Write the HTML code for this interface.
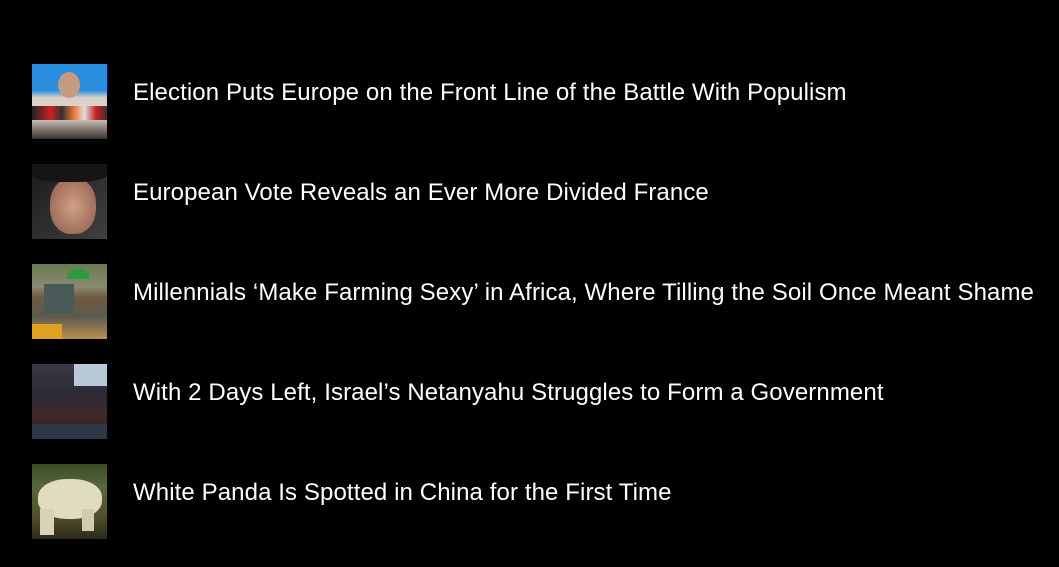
<!DOCTYPE html>
<html><head><meta charset="utf-8"><style>
html,body{margin:0;padding:0;background:#000;width:1059px;height:567px;overflow:hidden}
.item{position:absolute;left:32px;height:75px;width:1027px}
.th{position:absolute;left:0;top:0;width:75px;height:75px;overflow:hidden}
.t{position:absolute;left:101px;top:-9px;line-height:75px;color:#fff;font-family:"Liberation Sans",sans-serif;font-size:24px;white-space:nowrap;letter-spacing:0.1px}
</style></head><body>
<div class="item" style="top:64px">
 <div class="th" style="background:linear-gradient(#2a8ee0 0,#2a8ee0 35%,#d8d0c8 45%,#e0d6cc 70%,#3a3030 100%)">
  <div style="position:absolute;left:26px;top:8px;width:22px;height:26px;border-radius:50%;background:#c49a80"></div>
  <div style="position:absolute;left:0;top:42px;width:75px;height:14px;background:linear-gradient(90deg,#222,#c22 25%,#333 40%,#e87030 55%,#ddd 70%,#c22 85%,#333)"></div>
 </div>
 <div class="t">Election Puts Europe on the Front Line of the Battle With Populism</div>
</div>
<div class="item" style="top:164px">
 <div class="th" style="background:linear-gradient(135deg,#1a1a1a 0,#2a2a2a 40%,#404040 100%)">
  <div style="position:absolute;left:18px;top:14px;width:46px;height:56px;border-radius:45%;background:radial-gradient(#d2a088,#8a5a48)"></div>
  <div style="position:absolute;left:0;top:0;width:75px;height:18px;background:#151515;border-radius:0 0 40% 40%"></div>
 </div>
 <div class="t">European Vote Reveals an Ever More Divided France</div>
</div>
<div class="item" style="top:264px">
 <div class="th" style="background:linear-gradient(#6a7a50 0,#8a8a70 30%,#6e5a40 45%,#5c5a50 70%,#b89050 100%)">
  <div style="position:absolute;left:35px;top:5px;width:22px;height:10px;border-radius:8px 8px 0 0;background:#2e9a40"></div>
  <div style="position:absolute;left:12px;top:20px;width:30px;height:30px;background:#4a5a58"></div>
  <div style="position:absolute;left:0;top:60px;width:30px;height:15px;background:#e0a020"></div>
 </div>
 <div class="t">Millennials ‘Make Farming Sexy’ in Africa, Where Tilling the Soil Once Meant Shame</div>
</div>
<div class="item" style="top:364px">
 <div class="th" style="background:linear-gradient(#3a3a48 0,#2a2a34 40%,#402a28 70%,#20202a 100%)">
  <div style="position:absolute;left:42px;top:0;width:33px;height:22px;background:#b8c8d8"></div>
  <div style="position:absolute;left:0;top:60px;width:75px;height:15px;background:#303848"></div>
 </div>
 <div class="t">With 2 Days Left, Israel’s Netanyahu Struggles to Form a Government</div>
</div>
<div class="item" style="top:464px">
 <div class="th" style="background:linear-gradient(#3a4a28 0,#586838 30%,#50502c 70%,#2a2a1c 100%)">
  <div style="position:absolute;left:6px;top:15px;width:64px;height:40px;border-radius:45%;background:#e0dcc0"></div>
  <div style="position:absolute;left:8px;top:45px;width:14px;height:26px;background:#d8d2b6"></div>
  <div style="position:absolute;left:50px;top:45px;width:12px;height:22px;background:#d0caae"></div>
 </div>
 <div class="t">White Panda Is Spotted in China for the First Time</div>
</div>
</body></html>
